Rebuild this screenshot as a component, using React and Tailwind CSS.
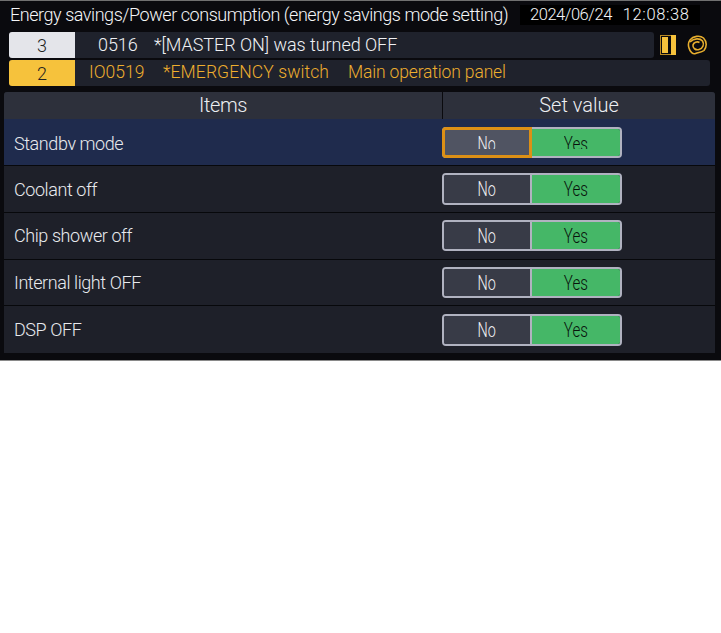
const font = { fontFamily: 'Roboto, "Liberation Sans", Arial, sans-serif' };

function Toggle({ focused, h }) {
  const clip = focused ? 'h-[14px] overflow-hidden leading-[18px] -mt-[1px]' : '';
  return (
    <div className={`relative w-[180px] ${h}`}>
      <div className="flex w-full h-full rounded-[4px] overflow-hidden border-[2px] border-[#b0b2c0]">
        <div className={`flex-1 flex items-center justify-center text-[#f0f1f4] text-[20px] font-light ${focused ? 'bg-[#505462]' : 'bg-[#383b47]'}`}>
          <span className={`scale-x-[0.72] ${clip}`}>No</span>
        </div>
        <div className="w-[2px] bg-[#b0b2c0]" />
        <div className="w-[88px] bg-[#45b767] flex items-center justify-center text-[#08130c] text-[20px] font-light">
          <span className={`scale-x-[0.76] ${clip}`}>Yes</span>
        </div>
      </div>
      {focused && (
        <div className="absolute left-0 top-0 w-[90px] h-full rounded-l-[4px] border-[3px] border-[#dc9016]" />
      )}
    </div>
  );
}

function Row({ label, active, h, th, pad }) {
  return (
    <div className={`flex items-center ${h} ${pad} border-b border-[#07080b] last:border-b-0 ${active ? 'bg-[#1f2b4d]' : ''}`}>
      <div className={`w-[438px] pl-[10px] text-[18px] font-light text-[#e8eaee] tracking-[-0.42px] ${active ? '-mt-[2px]' : ''}`}>
        <span className={active ? 'block h-[17px] overflow-hidden leading-[21px]' : ''}>{label}</span>
      </div>
      <Toggle focused={active} h={th} />
    </div>
  );
}

export default function App() {
  return (
    <div className="w-[721px] h-[633px] bg-white" style={font}>
      <div className="h-[361px] bg-[#0a0a0e] border-t border-[#707070] border-b border-b-[#8a8a8a] flex flex-col">
        <div className="flex items-center h-[28px] pl-[10px]">
          <div className="text-[18px] font-light text-[#f5f6f8] w-[510px] -mt-[2px] whitespace-nowrap tracking-[-0.45px]">
            Energy savings/Power consumption (energy savings mode setting)
          </div>
          <div className="flex w-[180px] h-[20px] bg-black items-center text-[16.5px] font-light text-[#f5f6f8] pl-[10px] whitespace-pre">
            <span className="tracking-[-0.45px]">2024/06/24</span>
            <span className="ml-[11px] tracking-[0.6px]">12:08:38</span>
          </div>
        </div>
        <div className="flex items-center h-[26px] mt-[3px] ml-[9px]">
          <div className="flex w-[645px] h-[26px] rounded-[3px] bg-[#1f222c] overflow-hidden">
            <div className="w-[66px] bg-[#e4e5ea] text-[#222] text-[18px] font-light flex items-center justify-center">3</div>
            <div className="flex items-center pb-[1px] text-[18px] font-light text-[#f0f1f4] whitespace-pre tracking-[-0.05px]">
              <span className="ml-[23px] w-[56px]">0516</span>
              <span>*[MASTER ON] was turned OFF</span>
            </div>
          </div>
          <svg className="ml-[6px]" width="16" height="20" viewBox="0 0 16 20">
            <rect x="0.5" y="0.5" width="15" height="19" fill="#0a0a0e" stroke="#b98a24" />
            <rect x="2" y="2" width="6" height="16" fill="#f6c23c" />
            <rect x="11" y="0" width="5" height="20" fill="#f6c23c" />
          </svg>
          <svg className="ml-[11px]" width="20" height="20" viewBox="0 0 20 20" fill="none" stroke="#e7ae2e" strokeWidth="1.6">
            <path d="M3 5 C6 1 13 0 16.5 3 C20 6.5 20 12 17 15.5 C14 18 11 17 8.5 18.5 C6 19.5 3 17 2 13 C1 10 1.5 7 3 5" />
            <path d="M3 7 C7 3 13 3 15.5 6 C17.5 9 16 13.5 12 14.5 C8.5 15.5 5.5 13 6 10 C6.5 7.5 10 6 12.5 7.5" />
          </svg>
        </div>
        <div className="flex w-[701px] h-[26px] mt-[2px] ml-[9px] rounded-[3px] bg-[#1f222c] overflow-hidden">
          <div className="w-[66px] bg-[#f6c23c] text-[#222] text-[18px] font-light flex items-center justify-center">2</div>
          <div className="flex items-center pb-[2px] text-[17.5px] font-light text-[#eeae2e] whitespace-pre">
            <span className="ml-[14px] w-[74px]">IO0519</span>
            <span className="w-[185px] tracking-[0.1px]">*EMERGENCY switch</span>
            <span className="tracking-[-0.15px]">Main operation panel</span>
          </div>
        </div>
        <div className="mt-[6px] mx-[4px] w-[711px] rounded-t-[3px] overflow-hidden bg-[#1e2029]">
          <div className="flex h-[27px] pb-[2px] bg-[#2d303b] text-[20px] font-light text-[#eceef2]">
            <div className="w-[438px] flex items-center justify-center tracking-[-0.4px]">Items</div>
            <div className="w-px bg-[#0a0a0e] -mb-[2px]" />
            <div className="flex-1 flex items-center justify-center">Set value</div>
          </div>
          <Row label="Standby mode" active h="h-[47px]" th="h-[31px]" pad="pt-[1px]" />
          <Row label="Coolant off" h="h-[47px]" th="h-[32px]" pad="" />
          <Row label="Chip shower off" h="h-[47px]" th="h-[31px]" pad="pb-[1px]" />
          <Row label="Internal light OFF" h="h-[46px]" th="h-[31px]" pad="" />
          <Row label="DSP OFF" h="h-[47px]" th="h-[32px]" pad="" />
        </div>
      </div>
    </div>
  );
}
